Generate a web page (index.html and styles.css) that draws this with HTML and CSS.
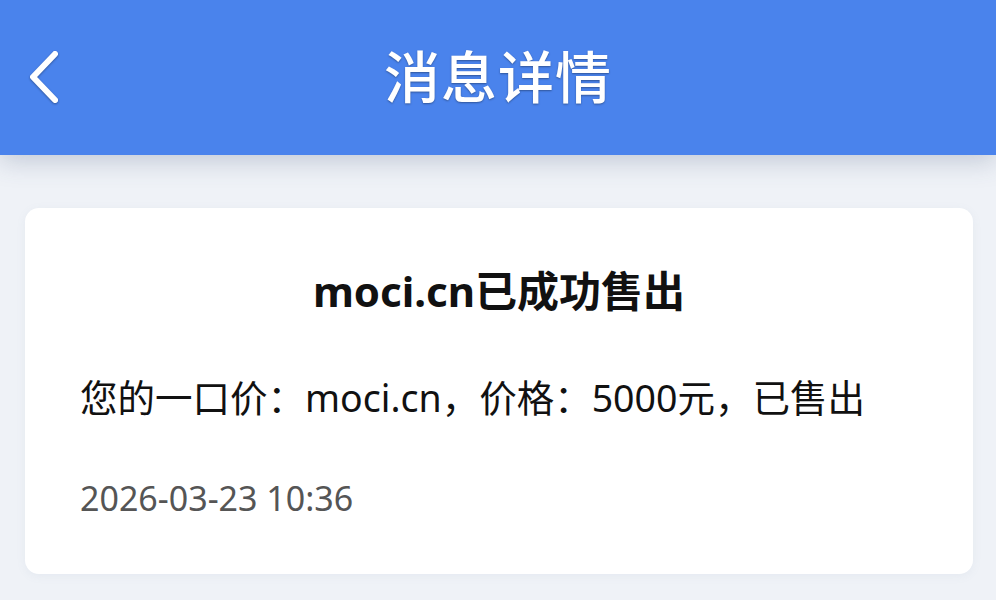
FILE: index.html
```html
<!DOCTYPE html>
<html lang="zh-CN">
<head>
    <meta charset="UTF-8">
    <meta name="viewport" content="width=device-width, initial-scale=1.0">
    <title>消息详情</title>
    <link rel="stylesheet" href="styles.css">
</head>
<body>
    <header class="topbar">
        <button class="back-btn" aria-label="返回">
            <svg width="40" height="60" viewBox="0 0 40 60">
                <path d="M31 6 L9 29 L31 52" fill="none" stroke="#fff" stroke-width="6" stroke-linecap="round" stroke-linejoin="round"/>
            </svg>
        </button>
        <h1 class="topbar-title">消息详情</h1>
        <span></span>
    </header>

    <main class="content">
        <div class="card">
            <h2 class="card-title">moci.cn已成功售出</h2>
            <p class="card-text">您的一口价：moci.cn，价格：5000元，已售出</p>
            <p class="card-time">2026-03-23 10:36</p>
        </div>
    </main>
</body>
</html>
```

FILE: styles.css
```css
body {
    margin: 0;
    font-family: "Noto Sans", "Noto Sans CJK SC", sans-serif;
    background: #eff2f7;
    color: #111;
    height: 600px;
    overflow: hidden;
}
.topbar {
    height: 155px;
    background: #4a83ec;
    display: grid;
    grid-template-columns: 1fr auto 1fr;
    align-items: center;
    box-shadow: 0 6px 24px rgba(60, 80, 120, 0.25);
    position: relative;
    z-index: 1;
}
.back-btn {
    background: none;
    border: none;
    padding: 0 0 0 24px;
    justify-self: start;
    display: flex;
    align-items: center;
    cursor: pointer;
    filter: drop-shadow(0 1px 1px rgba(0, 0, 0, 0.35));
}
.topbar-title {
    margin: 0;
    color: #ffffff;
    font-family: "Noto Sans CJK SC", sans-serif;
    font-size: 56px;
    font-weight: 500;
    letter-spacing: 1px;
    text-shadow: 0 1px 2px rgba(0, 0, 0, 0.35);
    transform: translateY(-4px);
}
.content {
    padding: 53px 23px 0 25px;
}
.card {
    background: #ffffff;
    border-radius: 14px;
    height: 366px;
    box-sizing: border-box;
    padding: 58px 55px 0 55px;
    box-shadow: 0 2px 10px rgba(120, 140, 170, 0.08);
}
.card-title {
    margin: 0;
    text-align: center;
    font-size: 42px;
    font-weight: 700;
    line-height: 50px;
    color: #111;
}
.card-text {
    margin: 57px 0 0 0;
    font-size: 37.5px;
    line-height: 50px;
    color: #111;
}
.card-time {
    margin: 55px 0 0 0;
    font-size: 34px;
    line-height: 40px;
    color: #555;
}
```
